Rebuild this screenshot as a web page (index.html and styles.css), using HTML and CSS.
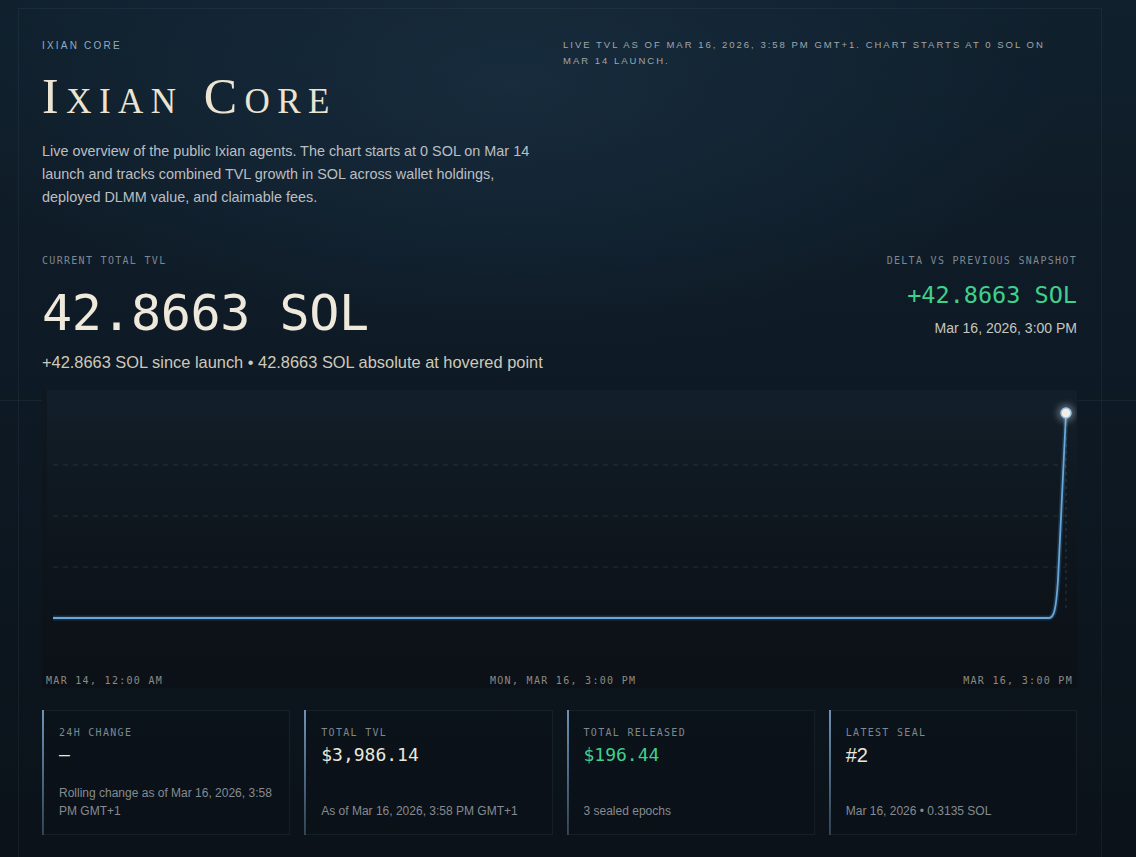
FILE: index.html
```html
<!DOCTYPE html>
<html lang="en">
<head>
  <meta charset="UTF-8">
  <title>Ixian Core</title>
  <meta name="viewport" content="width=device-width, initial-scale=1">
  <link rel="stylesheet" href="styles.css">
</head>
<body>

<div class="page">
  <div class="panel">
    <header class="hero">
      <div class="hero-left">
        <div class="eyebrow">Ixian Core</div>
        <h1 class="title">Ixian Core</h1>
        <p class="lead">Live overview of the public Ixian agents. The chart starts at 0 SOL on Mar 14 launch and tracks combined TVL growth in SOL across wallet holdings, deployed DLMM value, and claimable fees.</p>
      </div>
      <div class="hero-right">
        <p class="asof">Live TVL as of Mar 16, 2026, 3:58 PM GMT+1. Chart starts at 0 SOL on Mar 14 launch.</p>
      </div>
    </header>

    <section class="summary">
      <div class="summary-main">
        <div class="label">Current total TVL</div>
        <div class="big-value">42.8663 SOL</div>
        <div class="summary-note">+42.8663 SOL since launch • 42.8663 SOL absolute at hovered point</div>
      </div>
      <div class="summary-delta">
        <div class="label">Delta vs previous snapshot</div>
        <div class="delta-value">+42.8663 SOL</div>
        <div class="delta-time">Mar 16, 2026, 3:00 PM</div>
      </div>
    </section>

    <section class="chart">
      <svg class="chart-svg" viewBox="0 0 1035 284" preserveAspectRatio="none">
        <defs>
          <linearGradient id="plotbg" x1="0" y1="0" x2="0" y2="1">
            <stop offset="0" stop-color="#13202b" stop-opacity="0.9"/>
            <stop offset="1" stop-color="#0c1117" stop-opacity="0.2"/>
          </linearGradient>
          <filter id="glow" x="-50%" y="-50%" width="200%" height="200%">
            <feGaussianBlur stdDeviation="3"/>
          </filter>
        </defs>
        <rect x="5" y="0" width="1030" height="250" fill="url(#plotbg)"/>
        <g class="grid-lines">
          <line x1="11" y1="75" x2="1024" y2="75"/>
          <line x1="11" y1="126" x2="1024" y2="126"/>
          <line x1="11" y1="177" x2="1024" y2="177"/>
        </g>
        <line class="hover-line" x1="1024" y1="26" x2="1024" y2="222"/>
        <path class="series-glow" d="M11 228 L1007 228 C1012 228 1014 220 1016 190 L1024 23"/>
        <path class="series" d="M11 228 L1007 228 C1012 228 1014 220 1016 190 L1024 23"/>
        <circle cx="1024" cy="23" r="9" fill="#cfe3f5" opacity="0.35" filter="url(#glow)"/>
        <circle cx="1024" cy="23" r="5" fill="#f3efe3" stroke="#9cc3e6" stroke-width="1.5"/>
      </svg>
      <div class="axis">
        <span>Mar 14, 12:00 AM</span>
        <span>Mon, Mar 16, 3:00 PM</span>
        <span>Mar 16, 3:00 PM</span>
      </div>
    </section>

    <section class="cards">
      <div class="card">
        <div class="label">24h change</div>
        <div class="card-value">—</div>
        <div class="card-sub">Rolling change as of Mar 16, 2026, 3:58 PM GMT+1</div>
      </div>
      <div class="card">
        <div class="label">Total TVL</div>
        <div class="card-value">$3,986.14</div>
        <div class="card-sub">As of Mar 16, 2026, 3:58 PM GMT+1</div>
      </div>
      <div class="card">
        <div class="label">Total released</div>
        <div class="card-value green">$196.44</div>
        <div class="card-sub">3 sealed epochs</div>
      </div>
      <div class="card">
        <div class="label">Latest seal</div>
        <div class="card-value sans">#2</div>
        <div class="card-sub">Mar 16, 2026 • 0.3135 SOL</div>
      </div>
    </section>
  </div>
</div>

</body>
</html>
```

FILE: styles.css
```css
* {
  box-sizing: border-box;
}

html, body {
  margin: 0;
  height: 100%;
}

body {
  font-family: "Liberation Sans", Arial, sans-serif;
  color: #e9e3d4;
  background:
    radial-gradient(ellipse 70% 45% at 45% 10%, rgba(30, 56, 78, 0.5), rgba(30, 56, 78, 0) 70%),
    linear-gradient(180deg, #10202d 0%, #0e1a25 40%, #0b1219 100%);
  overflow: hidden;
}

.page {
  position: relative;
  min-height: 100%;
  padding: 8px 34px 0 18px;
}

/* faint horizontal rule across the whole page */
.page::before {
  content: "";
  position: absolute;
  left: 0;
  right: 0;
  top: 400px;
  height: 1px;
  background: rgba(140, 170, 200, 0.08);
}

.panel {
  position: relative;
  border: 1px solid rgba(140, 170, 200, 0.08);
  border-bottom: none;
  padding: 30px 24px 40px 23px;
}

.hero {
  display: grid;
  grid-template-columns: 521px 1fr;
}

.eyebrow {
  font-size: 10px;
  line-height: 14px;
  letter-spacing: 2.2px;
  text-transform: uppercase;
  color: #93abc4;
}

.title {
  margin: 17px 0 0;
  font-family: "Liberation Serif", "Times New Roman", serif;
  font-weight: normal;
  font-variant: small-caps;
  font-size: 50px;
  line-height: 52px;
  letter-spacing: 7.5px;
  color: #ece4d2;
}

.lead {
  margin: 18px 0 0;
  max-width: 505px;
  font-size: 14.4px;
  line-height: 23px;
  color: #bcbfc2;
}

.asof {
  margin: -2px 0 0;
  max-width: 500px;
  font-size: 9.5px;
  line-height: 16px;
  letter-spacing: 2px;
  text-transform: uppercase;
  color: #a1a6aa;
}

.summary {
  display: flex;
  justify-content: space-between;
  margin-top: 45px;
}

.label {
  font-family: "DejaVu Sans Mono", monospace;
  font-size: 10px;
  line-height: 14px;
  letter-spacing: 1.3px;
  text-transform: uppercase;
  color: #7f8790;
}

.big-value {
  margin-top: 17px;
  font-family: "DejaVu Sans Mono", monospace;
  font-size: 50px;
  line-height: 56px;
  letter-spacing: -0.4px;
  color: #efe9dc;
}

.summary-note {
  margin-top: 11px;
  font-size: 16.4px;
  line-height: 20px;
  color: #cfc9bb;
}

.summary-delta {
  text-align: right;
}

.delta-value {
  margin-top: 13px;
  font-family: "DejaVu Sans Mono", monospace;
  font-size: 23.5px;
  line-height: 28px;
  color: #3fd08c;
}

.delta-time {
  margin-top: 10px;
  font-size: 14px;
  line-height: 18px;
  color: #c8c6c0;
}

.chart {
  margin-top: 18px;
  height: 298px;
  background: linear-gradient(180deg, #0f1820 0%, #0c1117 100%);
  display: flex;
  flex-direction: column;
}

.chart-svg {
  display: block;
  width: 100%;
  height: 284px;
}

.grid-lines line {
  stroke: rgba(170, 180, 190, 0.16);
  stroke-width: 1;
  stroke-dasharray: 5 5;
}

.hover-line {
  stroke: rgba(170, 180, 190, 0.22);
  stroke-width: 1;
  stroke-dasharray: 3 4;
}

.series {
  fill: none;
  stroke: #6aa6d6;
  stroke-width: 1.8;
}

.series-glow {
  fill: none;
  stroke: #3f8ac4;
  stroke-width: 5;
  opacity: 0.25;
}

.axis {
  display: flex;
  justify-content: space-between;
  padding: 0 4px;
  font-family: "DejaVu Sans Mono", monospace;
  font-size: 10px;
  line-height: 14px;
  letter-spacing: 1.3px;
  text-transform: uppercase;
  color: #8b8b84;
}

.cards {
  display: grid;
  grid-template-columns: repeat(4, 1fr);
  gap: 14px;
  margin-top: 22px;
}

.card {
  position: relative;
  display: flex;
  flex-direction: column;
  height: 125px;
  padding: 15px 16px 14px 16px;
  border: 1px solid rgba(140, 170, 200, 0.09);
  background: rgba(10, 15, 21, 0.5);
}

.card::before {
  content: "";
  position: absolute;
  left: -1px;
  top: -1px;
  bottom: -1px;
  width: 2px;
  background: linear-gradient(180deg, #6e92b5 0%, rgba(110, 146, 181, 0.35) 100%);
}

.card-value {
  margin-top: 3px;
  font-family: "DejaVu Sans Mono", monospace;
  font-size: 18px;
  line-height: 24px;
  color: #ece7da;
}

.card-value.green {
  color: #3fd08c;
}

.card-value.sans {
  font-family: "Liberation Sans", Arial, sans-serif;
  font-size: 20px;
}

.card-sub {
  margin-top: auto;
  font-size: 12px;
  line-height: 18px;
  color: #868b91;
}
```
